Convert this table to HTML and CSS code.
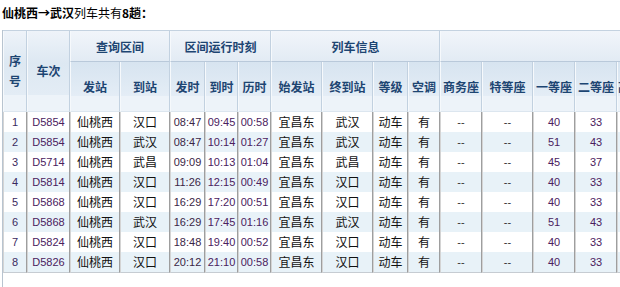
FILE: index.html
```html
<!DOCTYPE html>
<html lang="zh-CN">
<head>
<meta charset="utf-8">
<title>仙桃西→武汉</title>
<link rel="stylesheet" href="styles.css">
</head>
<body>
<div class="page">
  <div class="title"><b>仙桃西→武汉</b>列车共有<b>8趟：</b></div>
  <div class="wrap">
    <table class="trains">
      <colgroup>
        <col class="c-no"><col class="c-train"><col class="c-st"><col class="c-st">
        <col class="c-t1"><col class="c-t2"><col class="c-t2">
        <col class="c-st2"><col class="c-st2"><col class="c-t1"><col class="c-ac">
        <col class="c-s1"><col class="c-s2"><col class="c-s1"><col class="c-s1">
        <col class="c-s1"><col class="c-s1"><col class="c-s1"><col class="c-s1"><col class="c-s1"><col class="c-s1"><col class="c-s1">
      </colgroup>
      <thead>
        <tr class="h1">
          <th rowspan="2" class="tall">序号</th>
          <th rowspan="2" class="tall">车次</th>
          <th colspan="2">查询区间</th>
          <th colspan="3">区间运行时刻</th>
          <th colspan="4">列车信息</th>
          <th colspan="11">余票信息</th>
        </tr>
        <tr class="h2">
          <th>发站</th><th>到站</th>
          <th>发时</th><th>到时</th><th>历时</th>
          <th>始发站</th><th>终到站</th><th>等级</th><th>空调</th>
          <th>商务座</th><th>特等座</th><th>一等座</th><th>二等座</th>
          <th>高级软卧</th><th>软卧</th><th>硬卧</th><th>软座</th><th>硬座</th><th>无座</th><th>其它</th>
        </tr>
      </thead>
      <tbody>
        <tr><td>1</td><td>D5854</td><td>仙桃西</td><td>汉口</td><td>08:47</td><td>09:45</td><td>00:58</td><td>宜昌东</td><td>武汉</td><td>动车</td><td>有</td><td>--</td><td>--</td><td>40</td><td>33</td><td>--</td><td>--</td><td>--</td><td>--</td><td>--</td><td>--</td><td>--</td></tr>
        <tr><td>2</td><td>D5854</td><td>仙桃西</td><td>武汉</td><td>08:47</td><td>10:14</td><td>01:27</td><td>宜昌东</td><td>武汉</td><td>动车</td><td>有</td><td>--</td><td>--</td><td>51</td><td>43</td><td>--</td><td>--</td><td>--</td><td>--</td><td>--</td><td>--</td><td>--</td></tr>
        <tr><td>3</td><td>D5714</td><td>仙桃西</td><td>武昌</td><td>09:09</td><td>10:13</td><td>01:04</td><td>宜昌东</td><td>武昌</td><td>动车</td><td>有</td><td>--</td><td>--</td><td>45</td><td>37</td><td>--</td><td>--</td><td>--</td><td>--</td><td>--</td><td>--</td><td>--</td></tr>
        <tr><td>4</td><td>D5814</td><td>仙桃西</td><td>汉口</td><td>11:26</td><td>12:15</td><td>00:49</td><td>宜昌东</td><td>汉口</td><td>动车</td><td>有</td><td>--</td><td>--</td><td>40</td><td>33</td><td>--</td><td>--</td><td>--</td><td>--</td><td>--</td><td>--</td><td>--</td></tr>
        <tr><td>5</td><td>D5868</td><td>仙桃西</td><td>汉口</td><td>16:29</td><td>17:20</td><td>00:51</td><td>宜昌东</td><td>汉口</td><td>动车</td><td>有</td><td>--</td><td>--</td><td>40</td><td>33</td><td>--</td><td>--</td><td>--</td><td>--</td><td>--</td><td>--</td><td>--</td></tr>
        <tr><td>6</td><td>D5868</td><td>仙桃西</td><td>武汉</td><td>16:29</td><td>17:45</td><td>01:16</td><td>宜昌东</td><td>武汉</td><td>动车</td><td>有</td><td>--</td><td>--</td><td>51</td><td>43</td><td>--</td><td>--</td><td>--</td><td>--</td><td>--</td><td>--</td><td>--</td></tr>
        <tr><td>7</td><td>D5824</td><td>仙桃西</td><td>汉口</td><td>18:48</td><td>19:40</td><td>00:52</td><td>宜昌东</td><td>汉口</td><td>动车</td><td>有</td><td>--</td><td>--</td><td>40</td><td>33</td><td>--</td><td>--</td><td>--</td><td>--</td><td>--</td><td>--</td><td>--</td></tr>
        <tr><td>8</td><td>D5826</td><td>仙桃西</td><td>汉口</td><td>20:12</td><td>21:10</td><td>00:58</td><td>宜昌东</td><td>汉口</td><td>动车</td><td>有</td><td>--</td><td>--</td><td>40</td><td>33</td><td>--</td><td>--</td><td>--</td><td>--</td><td>--</td><td>--</td><td>--</td></tr>
      </tbody>
    </table>
  </div>
</div>
</body>
</html>
```

FILE: styles.css
```css
html, body {
  margin: 0;
  padding: 0;
  overflow: hidden;
  background: #ffffff;
}

.page {
  width: 620px;
  height: 287px;
  overflow: hidden;
  font-family: "Noto Sans CJK SC", "Liberation Sans", sans-serif;
  font-size: 12px;
  color: #000;
}

.title {
  padding: 5px 0 0 2px;
  height: 25px;
  line-height: 16px;
  font-size: 12px;
  color: #000;
}

.title b {
  font-weight: bold;
}

.wrap {
  margin-left: 2px;
  border-left: 1px solid #b8c4d0;
  height: 257px;
}

.trains {
  border-collapse: separate;
  border-spacing: 0;
  table-layout: fixed;
  width: 908px;
  border-top: 1px solid #c4d2e0;
}

.c-no { width: 24px; }
.c-train { width: 43px; }
.c-st { width: 50px; }
.c-t1 { width: 35px; }
.c-t2 { width: 33px; }
.c-st2 { width: 51px; }
.c-ac { width: 32px; }
.c-s1 { width: 42px; }
.c-s2 { width: 51px; }

.trains th {
  font-weight: bold;
  color: #1d4572;
  text-align: center;
  padding: 0;
  border-left: 1px solid #f6f9fc;
  border-right: 1px solid #c2d1e0;
  white-space: normal;
  overflow: hidden;
}

.h1 th {
  height: 30px;
  background: linear-gradient(#f1f5fa, #e2ebf4);
  border-bottom: 1px solid #b9c9da;
}

.h1 th.tall {
  background: linear-gradient(#eef3f9 0%, #dde8f2 40%, #e3ecf5 80%, #edf3f9 80%);
  line-height: 20px;
  border-bottom: 1px solid #dce6ef;
}

.h2 th {
  height: 49px;
  background: linear-gradient(#d7e4f0 0%, #e4edf6 70%, #edf3f9 70%);
  border-bottom: 1px solid #dce6ef;
  white-space: nowrap;
}

.trains td {
  height: 20px;
  padding: 0;
  text-align: center;
  color: #111;
  border-left: 1px solid #d4d4d4;
  border-right: 1px solid #9e9e9e;
  white-space: nowrap;
  line-height: 20px;
  overflow: hidden;
}

.trains tbody tr:nth-child(even) td {
  background: #e8f2f8;
}

.trains tbody tr:last-child td {
  border-bottom: 1px solid #c6ccd2;
}

.trains td:nth-child(1),
.trains td:nth-child(2),
.trains td:nth-child(5),
.trains td:nth-child(6),
.trains td:nth-child(7),
.trains td:nth-child(14),
.trains td:nth-child(15) {
  font-family: "Liberation Sans", sans-serif;
  font-size: 11px;
  color: #4a215e;
}

.trains td:nth-child(1) {
  color: #3a2a60;
}

.trains td:nth-child(5) {
  color: #3a2646;
}

.trains td:nth-child(n+12) {
  font-family: "Liberation Sans", sans-serif;
  font-size: 11px;
}

.trains td:nth-child(12),
.trains td:nth-child(13),
.trains td:nth-child(n+16) {
  color: #333;
}
```
